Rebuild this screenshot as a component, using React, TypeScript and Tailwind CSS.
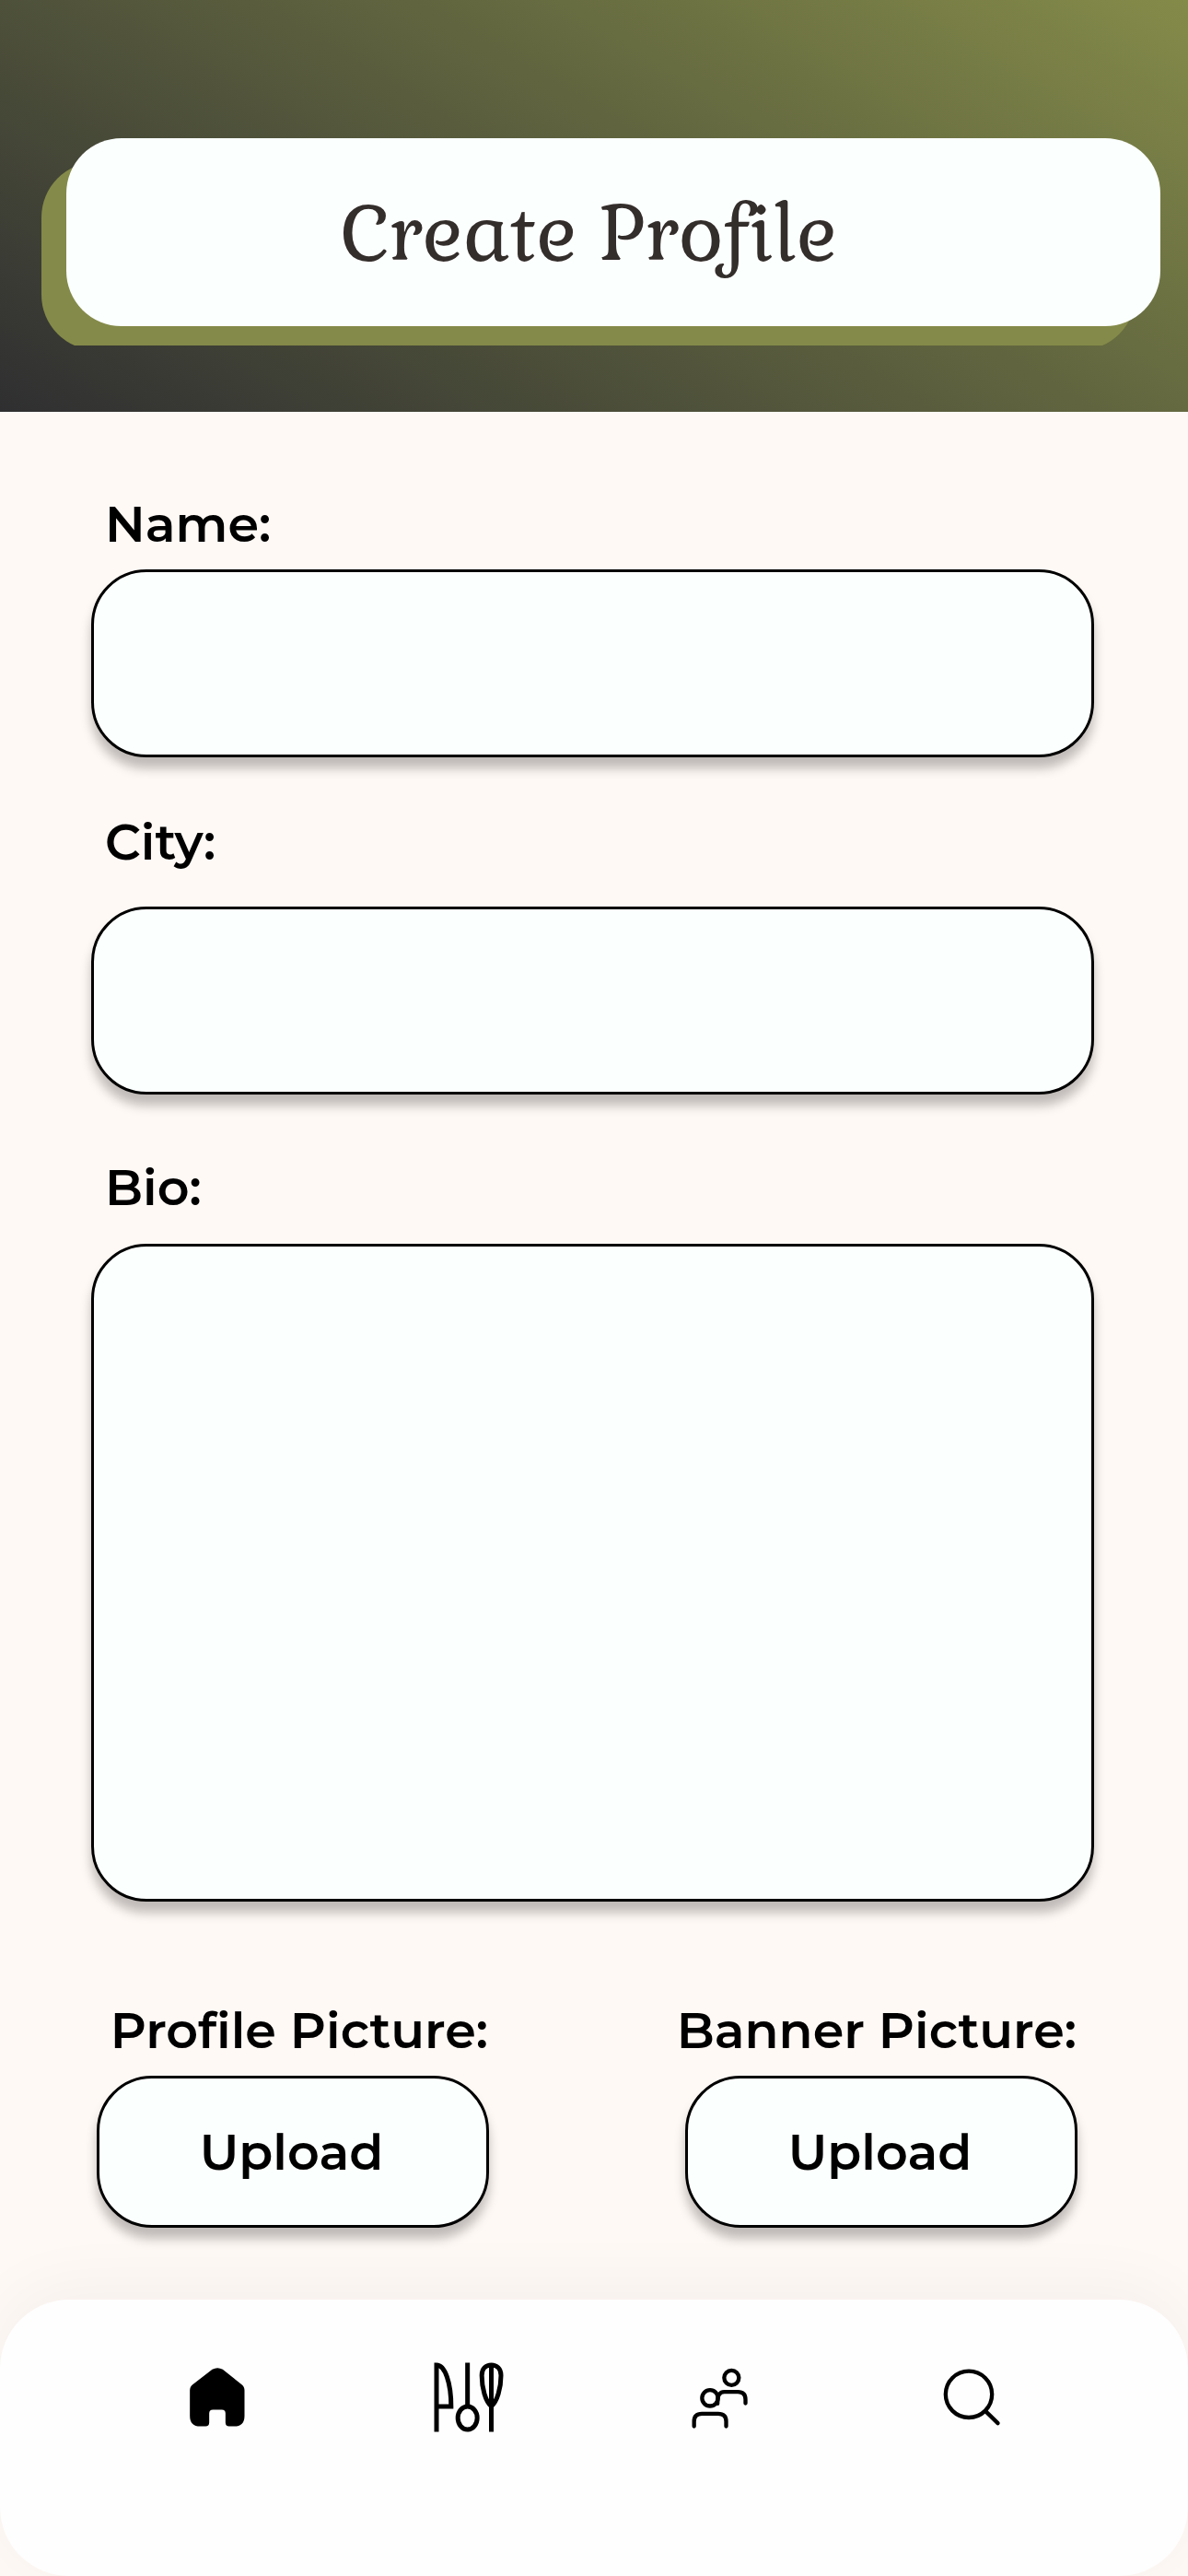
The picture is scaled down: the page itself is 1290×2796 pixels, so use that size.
import React from "react";

const field =
  "block w-[1089px] shrink-0 resize-none rounded-[60px] border-[3px] border-black bg-[#fbfffe] px-12 text-5xl shadow-[0_12px_12px_rgba(0,0,0,0.25)] outline-none";
const label =
  "block h-[64px] whitespace-nowrap font-['Montserrat','Inter',sans-serif] text-[54px] font-semibold leading-[64px] text-black";

function HomeIcon() {
  return (
    <svg className="size-[90px]" viewBox="31.5 52.5 270 270">
      <path d="M150 97Q167 87 184 97L246 146Q255 153 255 165V248Q255 282 221 282H205Q193 282 193 270V240Q193 228 181 228H152Q140 228 140 240V270Q140 282 128 282H111Q77 282 77 248V165Q77 153 86 146Z" />
    </svg>
  );
}

function UtensilsIcon() {
  return (
    <svg className="size-[90px]" viewBox="850.5 52.5 270 270" fill="none" stroke="black" strokeWidth="15">
      <path d="M880.500 300V82.500C908 82.500 928 140 928 217.500H880.500" />
      <path d="M981.500 75V217" />
      <ellipse cx="981.500" cy="255" rx="31.500" ry="37.500" />
      <path d="M1059 82.500V300M1059 217C1040 201 1028 158 1028 116C1028 94 1042 82.500 1059 82.500S1090.500 94 1090.500 116C1090.500 158 1078 201 1059 217Z" />
    </svg>
  );
}

function PeopleIcon() {
  return (
    <svg className="size-[90px]" viewBox="49.5 52.5 270 270" fill="none" stroke="black" strokeWidth="13" strokeLinecap="round">
      <circle cx="221.500" cy="124" r="24" />
      <circle cx="151.500" cy="190" r="26" />
      <path d="M99.500 282V266Q99.500 241 125 241H178Q204 241 204 266V282" />
      <path d="M176 208Q174 170 198 170H242Q267 170 267 195V207" />
    </svg>
  );
}

function SearchIcon() {
  return (
    <svg className="size-[90px]" viewBox="868.5 52.5 270 270" fill="none" stroke="black" strokeWidth="13" strokeLinecap="round">
      <circle cx="994.500" cy="178" r="75.500" />
      <path d="M1049 233L1089 272" />
    </svg>
  );
}

function Upload({ title }: { title: string }) {
  return (
    <div className="flex w-[426px] flex-col items-end">
      <span className={`${label} mr-px`}>{title}</span>
      <button className="mt-[17px] flex h-[165px] w-full items-center justify-center rounded-[60px] border-[3px] border-black bg-[#fbfffe] pr-[3px] shadow-[0_12px_12px_rgba(0,0,0,0.25)]">
        <span className={label}>Upload</span>
      </button>
    </div>
  );
}

export default function App() {
  return (
    <div className="flex h-[2796px] w-[1290px] flex-col overflow-hidden bg-[#fff9f5]">
      <header className="h-[447px] shrink-0 bg-[linear-gradient(31deg,#2f2f31,#848b49)] pl-[72px] pt-[150px]">
        <div className="relative h-[204px] w-[1188px]">
          <div className="absolute -left-[27px] top-[26px] h-[199px] w-[1188px] overflow-hidden">
            <div className="h-[204px] rounded-[60px] bg-[#848a49]" />
          </div>
          <h1 className="relative flex h-full items-center whitespace-nowrap rounded-[60px] bg-[#fbfffe] pl-[298px] pt-[2px] font-['Gabriela','Liberation_Serif',serif] text-[84px] leading-none text-[#332d2b] [font-variant-ligatures:none]">
            Create Profile
          </h1>
        </div>
      </header>

      <main className="flex flex-1 flex-col pl-[99px]">
        <label className={`${label} ml-[15px] mt-[90px]`}>Name:</label>
        <input className={`${field} mt-[17px] h-[204px]`} />
        <label className={`${label} ml-[15px] mt-[60px]`}>City:</label>
        <input className={`${field} mt-[38px] h-[204px]`} />
        <label className={`${label} ml-[15px] mt-[69px]`}>Bio:</label>
        <textarea className={`${field} mt-[29px] h-[714px]`} />
        <div className="ml-[6px] mt-[108px] flex gap-[213px]">
          <Upload title="Profile Picture:" />
          <Upload title="Banner Picture:" />
        </div>
      </main>

      <nav className="relative flex h-[300px] shrink-0 items-start rounded-[75px] bg-[#fefefe] px-[99px] pt-[61px] shadow-[0_-12px_75px_rgba(0,0,0,0.045)]">
        {[HomeIcon, UtensilsIcon, PeopleIcon, SearchIcon].map((Icon, i) => (
          <button key={i} className="flex flex-1 justify-center">
            <Icon />
          </button>
        ))}
      </nav>
    </div>
  );
}
